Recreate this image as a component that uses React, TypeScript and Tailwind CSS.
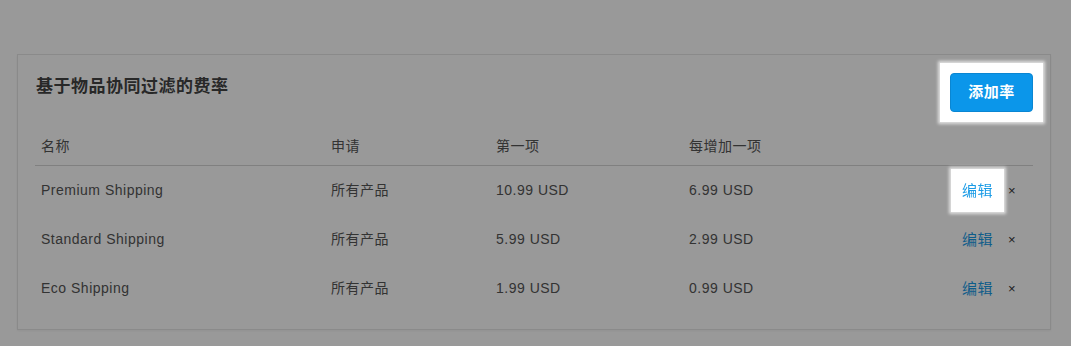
import React from "react"

const rates = [
    { name: "Premium Shipping", applies: "所有产品", first: "10.99 USD", each: "6.99 USD" },
    { name: "Standard Shipping", applies: "所有产品", first: "5.99 USD", each: "2.99 USD" },
    { name: "Eco Shipping", applies: "所有产品", first: "1.99 USD", each: "0.99 USD" },
]

const cols = "grid grid-cols-[290px_165px_193px_1fr_auto]"

export default function App() {
    return (
        <div
            className="relative min-h-screen bg-white pt-[54px] pl-[17px] pr-[20px] tracking-[0.5px] text-[#555]"
            style={{ fontFamily: '"Liberation Sans", "Noto Sans CJK SC", sans-serif' }}
        >
            <div className="border border-[#e6e6e6] px-[17px] pt-[18px] pb-[16px] shadow-[0_1px_2px_rgba(0,0,0,0.05)]">
                <div className="flex items-start justify-between">
                    <h2 className="text-[17px] font-bold leading-[28px] text-[#444] pl-[1px]">基于物品协同过滤的费率</h2>
                    {/* tour highlight */}
                    <div className="relative z-20 -m-[10px] p-[10px] bg-white shadow-[0_0_3px_2px_rgba(255,255,255,0.7)]">
                        <button className="h-[39px] w-[83px] rounded-[4px] border border-[#0a86d2] bg-[#0b96ea] text-[15px] font-bold text-white">
                            添加率
                        </button>
                    </div>
                </div>

                <div className="mt-[13px] text-[14px]">
                    <div className={`${cols} h-[41px] items-center border-b border-[#d6d6d6] pt-[2px]`}>
                        <div className="pl-[6px]">名称</div>
                        <div className="pl-[6px]">申请</div>
                        <div className="pl-[6px]">第一项</div>
                        <div className="pl-[6px]">每增加一项</div>
                        <div />
                    </div>
                    {rates.map((r, i) => (
                        <div key={r.name} className={`${cols} h-[49px] items-center`}>
                            <div className="pl-[6px]">{r.name}</div>
                            <div className="pl-[6px]">{r.applies}</div>
                            <div className="pl-[6px]">{r.first}</div>
                            <div className="pl-[6px]">{r.each}</div>
                            <div className="flex items-center justify-end pr-[17px]">
                                {i === 0 ? (
                                    <span className="relative z-20 -m-[11px] p-[11px] bg-white shadow-[0_0_3px_2px_rgba(255,255,255,0.7)]">
                                        <a className="block text-[15px] leading-[21px] text-[#1a9be6]">编辑</a>
                                    </span>
                                ) : (
                                    <a className="block text-[15px] leading-[21px] text-[#1a9be6]">编辑</a>
                                )}
                                <span className="ml-[15px] text-[13px] leading-none text-[#333]">×</span>
                            </div>
                        </div>
                    ))}
                </div>
            </div>

            <div className="fixed inset-0 z-10 bg-black/40" />
        </div>
    )
}
